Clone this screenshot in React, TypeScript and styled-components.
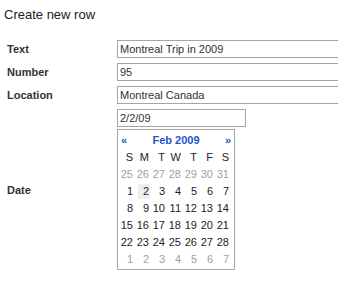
import React from 'react'
import styled, { createGlobalStyle } from 'styled-components'

const GlobalStyle = createGlobalStyle`
  body {
    margin: 0;
    background: #fff;
    font-family: "Liberation Sans", Arial, sans-serif;
    color: #222;
  }
`

const Page = styled.div`
  width: 338px;
  height: 298px;
  overflow: hidden;
  padding: 0 4px;
  box-sizing: border-box;
`

const Title = styled.div`
  font-size: 13px;
  line-height: 18px;
  padding-top: 6px;
  height: 40px;
  box-sizing: border-box;
`

const FormGrid = styled.div`
  display: grid;
  grid-template-columns: 113px 1fr;
  row-gap: 5px;
  align-items: center;
`

const Label = styled.div`
  font-size: 11px;
  font-weight: bold;
  color: #333;
  padding-left: 3px;
`

const TextInput = styled.input<{ $width?: number }>`
  box-sizing: border-box;
  width: ${({ $width }) => ($width ? `${$width}px` : '260px')};
  height: 18px;
  margin: 0;
  padding: 0 2px;
  border: 1px solid #a5a5a5;
  font-family: "Liberation Sans", Arial, sans-serif;
  font-size: 11px;
  color: #333;
  outline: none;
`

const DateField = styled.div`
  display: flex;
  flex-direction: column;
  gap: 2px;
`

const Calendar = styled.div`
  box-sizing: border-box;
  width: 118px;
  height: 141px;
  border: 1px solid #a5a5a5;
  padding: 0 1px 1px;
  font-size: 11px;
`

const CalHeader = styled.div`
  display: flex;
  justify-content: space-between;
  align-items: center;
  height: 19px;
  padding: 0 2px;
  font-weight: bold;
  color: #2255cc;
`

const DayGrid = styled.div`
  display: grid;
  grid-template-columns: repeat(7, 16px);
  grid-auto-rows: 17px;
`

const Cell = styled.div<{ $muted?: boolean }>`
  display: flex;
  align-items: center;
  justify-content: flex-end;
  padding-right: 1px;
  color: ${({ $muted }) => ($muted ? '#a0a0a0' : '#222')};
`

const DayNum = styled.span<{ $selected?: boolean }>`
  display: inline-block;
  min-width: 12px;
  line-height: 15px;
  text-align: right;
  padding-right: 1px;
  box-sizing: border-box;
  background: ${({ $selected }) => ($selected ? '#eeeeee' : 'transparent')};
`

const weekdays = ['S', 'M', 'T', 'W', 'T', 'F', 'S']

type Day = { n: number; muted?: boolean; selected?: boolean }

function buildDays(): Day[] {
  const days: Day[] = []
  for (let n = 25; n <= 31; n++) days.push({ n, muted: true })
  for (let n = 1; n <= 28; n++) days.push({ n, selected: n === 2 })
  for (let n = 1; n <= 7; n++) days.push({ n, muted: true })
  return days
}

export default function App() {
  const days = buildDays()

  return (
    <Page>
      <GlobalStyle />
      <Title>Create new row</Title>
      <FormGrid>
        <Label>Text</Label>
        <TextInput defaultValue="Montreal Trip in 2009" />
        <Label>Number</Label>
        <TextInput defaultValue="95" />
        <Label>Location</Label>
        <TextInput defaultValue="Montreal Canada" />
        <Label>Date</Label>
        <DateField>
          <TextInput $width={129} defaultValue="2/2/09" />
          <Calendar>
            <CalHeader>
              <span>«</span>
              <span>Feb 2009</span>
              <span>»</span>
            </CalHeader>
            <DayGrid>
              {weekdays.map((d, i) => (
                <Cell key={'w' + i}>
                  <DayNum>{d}</DayNum>
                </Cell>
              ))}
              {days.map((d, i) => (
                <Cell key={i} $muted={d.muted}>
                  <DayNum $selected={d.selected}>{d.n}</DayNum>
                </Cell>
              ))}
            </DayGrid>
          </Calendar>
        </DateField>
      </FormGrid>
    </Page>
  )
}
